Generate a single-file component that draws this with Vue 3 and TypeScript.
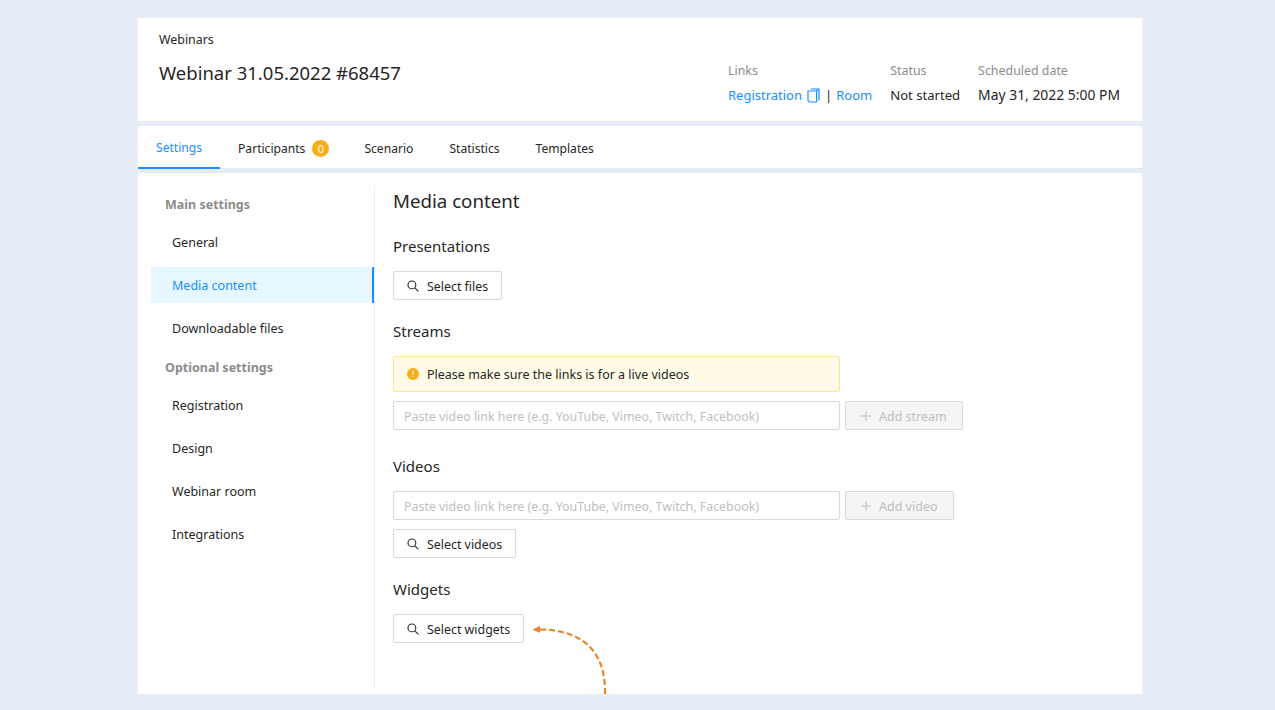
<script setup lang="ts">
const tabs = ['Settings', 'Participants', 'Scenario', 'Statistics', 'Templates']
const mainItems = ['General', 'Media content', 'Downloadable files']
const optionalItems = ['Registration', 'Design', 'Webinar room', 'Integrations']
const placeholder = 'Paste video link here (e.g. YouTube, Vimeo, Twitch, Facebook)'
</script>

<template>
  <div class="page">
    <header class="head card">
      <div class="head__left">
        <div class="crumb">Webinars</div>
        <h1 class="title">Webinar 31.05.2022 #68457</h1>
      </div>
      <div class="meta">
        <div class="meta__col">
          <span class="meta__label">Links</span>
          <span class="meta__value">
            <a class="link">Registration</a>
            <svg class="copy" width="13" height="15" viewBox="0 0 13 15" fill="none" stroke="#1890ff" stroke-width="1.2">
              <path d="M3.600 1h8.400v11.400" />
              <path d="M1 3h8.600v11H2.400L1 12.600z" />
              <path d="M10.400 1v2" />
            </svg>
            <span class="sep">|</span>
            <a class="link">Room</a>
          </span>
        </div>
        <div class="meta__col">
          <span class="meta__label">Status</span>
          <span class="meta__value meta__value--status">Not started</span>
        </div>
        <div class="meta__col">
          <span class="meta__label">Scheduled date</span>
          <span class="meta__value meta__value--date">May 31, 2022 5:00 PM</span>
        </div>
      </div>
    </header>

    <nav class="tabs card">
      <a v-for="(tab, i) in tabs" :key="tab" :class="['tab', { 'tab--active': i === 0 }]">
        {{ tab }}
        <span v-if="tab === 'Participants'" class="count">0</span>
      </a>
    </nav>

    <div class="body card">
      <aside class="side">
        <div class="side__group">Main settings</div>
        <a v-for="item in mainItems" :key="item" :class="['side__item', { 'side__item--active': item === 'Media content' }]">{{ item }}</a>
        <div class="side__group side__group--second">Optional settings</div>
        <a v-for="item in optionalItems" :key="item" class="side__item">{{ item }}</a>
      </aside>

      <main class="main">
        <h2 class="main__title">Media content</h2>

        <h3 class="section">Presentations</h3>
        <button class="btn">
          <svg class="search" width="12" height="12" viewBox="0 0 12 12" fill="none" stroke="#262626" stroke-width="1.1"><circle cx="4.900" cy="4.900" r="3.900" /><path d="M7.800 7.800l3.600 3.600" /></svg>
          Select files
        </button>

        <h3 class="section section--streams">Streams</h3>
        <div class="alert">
          <svg width="12" height="12" viewBox="0 0 12 12"><circle cx="6" cy="6" r="6" fill="#faad14" /><path d="M6 2.800v3.900" stroke="#fff" stroke-width="1.200" /><path d="M6 8.200v1.100" stroke="#fff" stroke-width="1.200" /></svg>
          Please make sure the links is for a live videos
        </div>
        <div class="row">
          <div class="input">{{ placeholder }}</div>
          <button class="btn btn--off">
            <svg width="12" height="12" viewBox="0 0 12 12" stroke="#bfbfbf" stroke-width="1"><path d="M6 1v10M1 6h10" /></svg>
            Add stream
          </button>
        </div>

        <h3 class="section section--videos">Videos</h3>
        <div class="row row--videos">
          <div class="input">{{ placeholder }}</div>
          <button class="btn btn--off">
            <svg width="12" height="12" viewBox="0 0 12 12" stroke="#bfbfbf" stroke-width="1"><path d="M6 1v10M1 6h10" /></svg>
            Add video
          </button>
        </div>
        <button class="btn">
          <svg class="search" width="12" height="12" viewBox="0 0 12 12" fill="none" stroke="#262626" stroke-width="1.1"><circle cx="4.900" cy="4.900" r="3.900" /><path d="M7.800 7.800l3.600 3.600" /></svg>
          Select videos
        </button>

        <h3 class="section section--widgets">Widgets</h3>
        <button class="btn">
          <svg class="search" width="12" height="12" viewBox="0 0 12 12" fill="none" stroke="#262626" stroke-width="1.1"><circle cx="4.900" cy="4.900" r="3.900" /><path d="M7.800 7.800l3.600 3.600" /></svg>
          Select widgets
        </button>
      </main>

      <!-- annotation arrow laid over the card -->
      <svg class="arrow" width="80" height="71" viewBox="0 0 80 71" fill="none">
        <path d="M75 71C76 34 58 7 10 6.500" stroke="#ea8428" stroke-width="2.200" stroke-dasharray="6 3" />
        <path d="M2.500 6.500L10 3V10z" fill="#ea8428" />
      </svg>
    </div>
  </div>
</template>

<style>
html, body {
  margin: 0;
  background: #e6edf6;
}
</style>

<style scoped>
.page {
  width: 1004px;
  margin-left: 138px;
  padding: 18px 0 16px;
  display: flex;
  flex-direction: column;
  gap: 5px;
  font-family: 'Noto Sans', sans-serif;
  font-size: 13px;
  color: #262626;
}

.card {
  background: #fff;
}

.head {
  height: 103px;
  box-sizing: border-box;
  padding: 13px 22px 0 21px;
  display: flex;
  justify-content: space-between;
}

.crumb {
  font-size: 12.400px;
  line-height: 18px;
}

.title {
  margin: 10px 0 0;
  font-size: 18.500px;
  font-weight: 400;
  line-height: 28px;
}

.meta {
  display: flex;
  gap: 18px;
  padding-top: 31px;
}

.meta__col {
  display: flex;
  flex-direction: column;
  gap: 5px;
}

.meta__label {
  font-size: 12.400px;
  line-height: 18px;
  color: #8c8c8c;
}

.meta__value {
  font-size: 13px;
  line-height: 20px;
  white-space: nowrap;
  display: flex;
  align-items: center;
}

.meta__value--status {
  font-size: 13.100px;
}

.meta__value--date {
  font-size: 13.900px;
}

.link {
  color: #1890ff;
}

.copy {
  margin-left: 5px;
}

.sep {
  margin: 0 4px 0 5px;
}

.tabs {
  height: 42px;
  display: flex;
}

.tab {
  display: flex;
  align-items: center;
  gap: 7px;
  padding: 1px 18px 0;
  box-sizing: border-box;
  height: 43px;
  font-size: 12.100px;
  color: #262626;
}

.tab--active {
  color: #1890ff;
  border-bottom: 2px solid #1890ff;
  padding-top: 2px;
}

.count {
  width: 17px;
  height: 17px;
  margin-right: -1px;
  border-radius: 50%;
  background: #faad14;
  color: #fff;
  font-size: 11px;
  line-height: 17px;
  text-align: center;
}

.body {
  height: 521px;
  box-sizing: border-box;
  padding: 12px 0 6px 13px;
  display: flex;
  position: relative;
}

.side {
  width: 224px;
  box-sizing: border-box;
  border-right: 1px solid #eeeeee;
  padding-top: 12px;
}

.side__group {
  padding-left: 14px;
  font-size: 12.500px;
  font-weight: 700;
  line-height: 18px;
  color: #8c8c8c;
  margin-top: -1px;
  margin-bottom: 10px;
}

.side__group--second {
  margin-top: 13px;
  margin-bottom: 10px;
}

.side__item {
  display: flex;
  align-items: center;
  height: 36px;
  margin-bottom: 7px;
  padding-left: 21px;
  font-size: 12.500px;
  color: #262626;
  box-sizing: border-box;
}

.side__item--active {
  background: #e6f7ff;
  color: #1890ff;
  border-right: 2px solid #1890ff;
}

.main {
  padding-left: 18px;
  flex: 1;
}

.main__title {
  margin: 3px 0 0;
  font-size: 18.700px;
  font-weight: 400;
  line-height: 26px;
}

.section {
  margin: 21px 0 14px;
  font-size: 15px;
  font-weight: 400;
  line-height: 22px;
}

.section--streams {
  margin-top: 20px;
}

.section--videos {
  margin-top: 25px;
}

.section--widgets {
  margin-top: 20px;
}

.btn {
  height: 29px;
  box-sizing: border-box;
  display: flex;
  align-items: center;
  gap: 8px;
  padding: 2px 13px 0;
  background: #fff;
  border: 1px solid #d9d9d9;
  border-radius: 2px;
  font: inherit;
  font-size: 12.400px;
  color: #262626;
  white-space: nowrap;
}

.btn svg {
  margin-top: -1px;
}

.btn--off {
  background: #f5f5f5;
  color: #bfbfbf;
  gap: 7px;
  padding: 2px 15px 0 14px;
  font-size: 12.500px;
}

.alert {
  width: 447px;
  height: 36px;
  box-sizing: border-box;
  display: flex;
  align-items: center;
  gap: 8px;
  padding-left: 13px;
  background: #fffbe6;
  border: 1px solid #ffe58f;
  border-radius: 2px;
  font-size: 12.500px;
  margin-bottom: 9px;
}

.row {
  display: flex;
  gap: 5px;
}

.row--videos {
  margin-bottom: 9px;
}

.input {
  width: 447px;
  height: 29px;
  box-sizing: border-box;
  padding: 1px 0 0 10px;
  border: 1px solid #d9d9d9;
  border-radius: 2px;
  line-height: 27px;
  font-size: 12.400px;
  color: #bfbfbf;
}

.arrow {
  position: absolute;
  left: 392px;
  top: 450px;
}
</style>
